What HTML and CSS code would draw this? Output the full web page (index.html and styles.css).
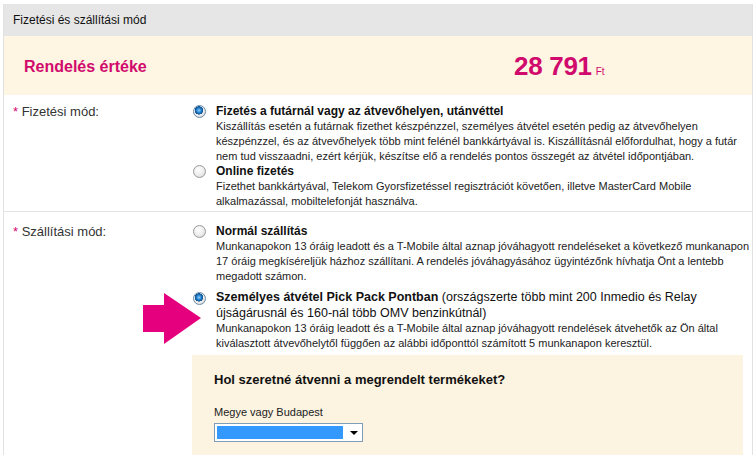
FILE: index.html
```html
<!DOCTYPE html>
<html lang="hu">
<head>
<meta charset="utf-8">
<link rel="stylesheet" href="styles.css">
</head>
<body>
<div class="panel">
  <div class="panel-head">Fizetési és szállítási mód</div>
  <div class="total">
    <div class="total-label">Rendelés értéke</div>
    <div class="total-value">28 791<span class="cur">Ft</span></div>
  </div>

  <div class="row row-pay">
    <div class="label"><span class="req">*</span> Fizetési mód:</div>
    <div class="options">
      <div class="option">
        <span class="radio checked"></span>
        <div class="opt-body">
          <div class="opt-title">Fizetés a futárnál vagy az átvevőhelyen, utánvéttel</div>
          <div class="opt-desc">Kiszállítás esetén a futárnak fizethet készpénzzel, személyes átvétel esetén pedig az átvevőhelyen<br>készpénzzel, és az átvevőhelyek több mint felénél bankkártyával is. Kiszállításnál előfordulhat, hogy a futár<br>nem tud visszaadni, ezért kérjük, készítse elő a rendelés pontos összegét az átvétel időpontjában.</div>
        </div>
      </div>
      <div class="option">
        <span class="radio"></span>
        <div class="opt-body">
          <div class="opt-title">Online fizetés</div>
          <div class="opt-desc">Fizethet bankkártyával, Telekom Gyorsfizetéssel regisztrációt követően, illetve MasterCard Mobile<br>alkalmazással, mobiltelefonját használva.</div>
        </div>
      </div>
    </div>
  </div>

  <div class="row row-ship">
    <div class="label"><span class="req">*</span> Szállítási mód:</div>
    <div class="options">
      <div class="option">
        <span class="radio"></span>
        <div class="opt-body">
          <div class="opt-title">Normál szállítás</div>
          <div class="opt-desc">Munkanapokon 13 óráig leadott és a T-Mobile által aznap jóváhagyott rendeléseket a következő munkanapon<br>17 óráig megkíséreljük házhoz szállítani. A rendelés jóváhagyásához ügyintézőnk hívhatja Önt a lentebb<br>megadott számon.</div>
        </div>
      </div>
      <div class="option option-pp">
        <svg class="arrow" width="60" height="54" viewBox="0 0 60 54" aria-hidden="true">
          <polygon points="0,12 21,12 21,0 58,25 21,51 21,39 0,39" fill="#e5007e"/>
        </svg>
        <span class="radio checked"></span>
        <div class="opt-body">
          <div class="opt-title big"><b>Személyes átvétel Pick Pack Pontban</b> (országszerte több mint 200 Inmedio és Relay<br>újságárusnál és 160-nál több OMV benzinkútnál)</div>
          <div class="opt-desc">Munkanapokon 13 óráig leadott és a T-Mobile által aznap jóváhagyott rendelések átvehetők az Ön által<br>kiválasztott átvevőhelytől függően az alábbi időponttól számított 5 munkanapon keresztül.</div>
        </div>
      </div>
      <div class="pickup">
        <div class="pickup-title">Hol szeretné átvenni a megrendelt termékeket?</div>
        <div class="field-label">Megye vagy Budapest</div>
        <div class="select"><span class="select-fill"></span><span class="select-btn"></span></div>
      </div>
    </div>
  </div>
</div>
</body>
</html>
```

FILE: styles.css
```css
* { box-sizing: border-box; }
html, body { margin: 0; padding: 0; background: #fff; }
body {
  font-family: "Liberation Sans", Arial, sans-serif;
  color: #222;
  overflow: hidden;
}
.panel {
  margin: 4px 3px 0 3px;
  width: 750px;
  border-left: 1px solid #e2e2e2;
  border-right: 1px solid #e2e2e2;
}
.panel-head {
  background: #e6e6e6;
  height: 32px;
  line-height: 32px;
  padding-left: 9px;
  font-size: 12px;
  color: #111;
}
.total {
  background: #fef5e2;
  height: 59px;
  display: flex;
  align-items: center;
  padding-top: 2px;
}
.total-label {
  width: 510px;
  padding-left: 20px;
  font-size: 16px;
  font-weight: bold;
  color: #d10a6d;
}
.total-value {
  font-size: 26px;
  font-weight: bold;
  color: #d10a6d;
  letter-spacing: -0.3px;
}
.cur {
  font-size: 10px;
  font-weight: normal;
  margin-left: 4px;
  letter-spacing: 0;
}
.row {
  display: grid;
  grid-template-columns: 189px 1fr;
  border-bottom: 1px solid #e4e4e4;
}
.row-pay { padding: 9px 0 2px; }
.row-ship { padding: 12px 0 0; border-bottom: none; }
.label {
  padding-left: 9px;
  font-size: 13px;
  color: #333;
  line-height: 16px;
}
.req { color: #d10a6d; }
.options { display: flex; flex-direction: column; }
.option {
  display: grid;
  grid-template-columns: 23px 1fr;
  position: relative;
}
.row-ship .option-pp { margin-top: 5px; }
.radio {
  width: 13px;
  height: 13px;
  border-radius: 50%;
  margin-top: 1px;
  border: 1px solid #9a9a9a;
  background: radial-gradient(circle at 40% 35%, #ffffff 0%, #ececec 55%, #cfcfcf 100%);
}
.radio.checked {
  border-color: #6b8aa8;
  background:
    radial-gradient(circle at 45% 40%, #8fd0ff 0, #1f7bc6 2.5px, #0c4f8e 4px, transparent 4.3px),
    radial-gradient(circle at 40% 35%, #ffffff 0%, #ececec 55%, #cfcfcf 100%);
}
.option-pp .radio { margin-top: 3px; }
.opt-title {
  font-size: 12px;
  font-weight: bold;
  line-height: 15px;
  color: #111;
  white-space: nowrap;
}
.opt-title.big {
  font-size: 12.5px;
  font-weight: normal;
  line-height: 16px;
}
.opt-desc {
  font-size: 11px;
  line-height: 15px;
  color: #222;
  white-space: nowrap;
}
.arrow {
  position: absolute;
  left: -50px;
  top: 4px;
}
.pickup {
  margin-top: 4px;
  width: 551px;
  margin-left: -1px;
  height: 100px;
  background: #fcf3e0;
  padding: 17px 0 0 22px;
}
.pickup-title {
  font-size: 13px;
  font-weight: bold;
  color: #111;
  line-height: 16px;
}
.field-label {
  margin-top: 17px;
  font-size: 11px;
  line-height: 14px;
  color: #222;
}
.select {
  margin-top: 4px;
  width: 149px;
  height: 19px;
  border: 1px solid #7f9db9;
  background: #fff;
  display: flex;
  padding: 2px;
}
.select-fill {
  width: 126px;
  background: #3399ff;
}
.select-btn {
  flex: 1;
  position: relative;
}
.select-btn::after {
  content: "";
  position: absolute;
  left: 7px;
  top: 5px;
  border-left: 4px solid transparent;
  border-right: 4px solid transparent;
  border-top: 4px solid #000;
}
```
